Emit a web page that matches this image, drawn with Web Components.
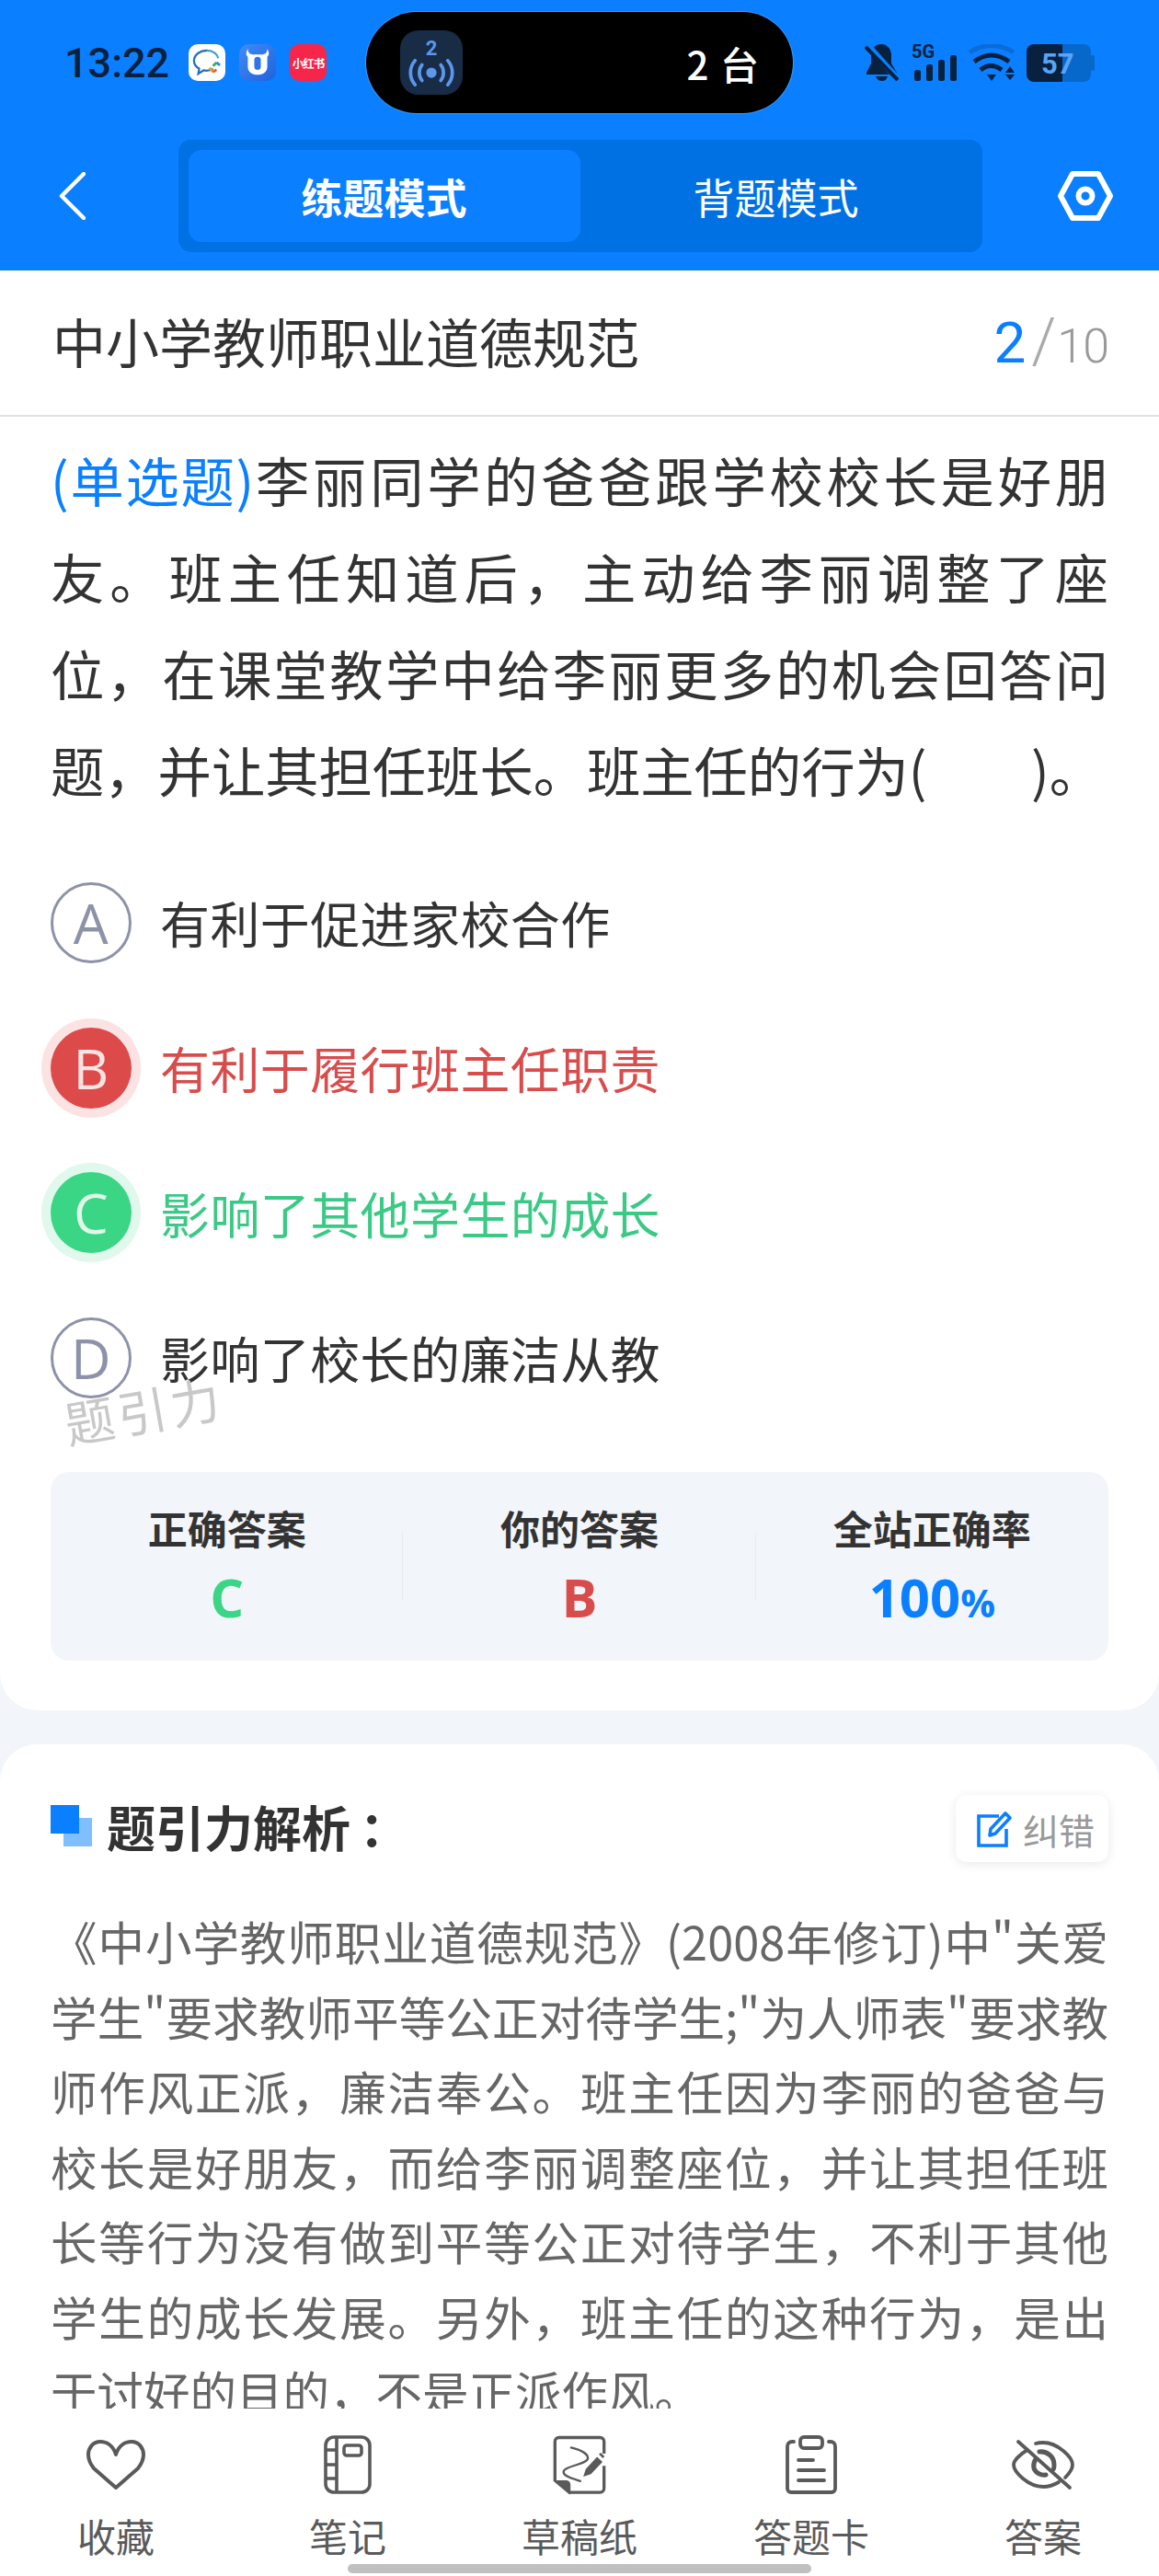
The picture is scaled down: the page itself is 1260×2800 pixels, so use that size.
<!DOCTYPE html>
<html lang="zh-CN">
<head>
<meta charset="UTF-8">
<title>题引力</title>
<style>
    html, body { margin: 0; padding: 0; background: #f2f5f9; }
    body { font-family: "Noto Sans CJK SC", sans-serif; }
</style>
</head>
<body>

<quiz-app>
    <status-bar slot="top"></status-bar>
    <mode-nav slot="top"></mode-nav>
    <title-bar slot="top" current="2" total="10">中小学教师职业道德规范</title-bar>

    <question-card><span slot="kind">(单选题)</span>李丽同学的爸爸跟学校校长是好朋友。班主任知道后，主动给李丽调整了座位，在课堂教学中给李丽更多的机会回答问题，并让其担任班长。班主任的行为(&emsp;&ensp;&nbsp;&nbsp;)。<option-item slot="options" letter="A">有利于促进家校合作</option-item>
        <option-item slot="options" letter="B" state="wrong">有利于履行班主任职责</option-item>
        <option-item slot="options" letter="C" state="right">影响了其他学生的成长</option-item>
        <option-item slot="options" letter="D">影响了校长的廉洁从教</option-item>
        <answer-stats slot="stats">
            <stat-item label="正确答案" tone="right">C</stat-item>
            <stat-item label="你的答案" tone="wrong">B</stat-item>
            <stat-item label="全站正确率" tone="blue">100<small style="font-size:42px">%</small></stat-item>
        </answer-stats>
    </question-card>

    <analysis-card>
        《中小学教师职业道德规范》(2008年修订)中"关爱学生"要求教师平等公正对待学生;"为人师表"要求教师作风正派，廉洁奉公。班主任因为李丽的爸爸与校长是好朋友，而给李丽调整座位，并让其担任班长等行为没有做到平等公正对待学生，不利于其他学生的成长发展。另外，班主任的这种行为，是出于讨好的目的，不是正派作风。
    </analysis-card>

    <tool-bar slot="bottom">
        <tool-item label="收藏">
            <svg viewBox="0 0 64 56" width="64" height="56" fill="none" stroke="#5a5a5a" stroke-width="4" stroke-linejoin="round"><path d="M32 17C29 7 22 3 15 3 7 3 2 10 2 17c0 6 2 10 6 15l24 21L56 32c4-5 6-9 6-15 0-7-5-14-13-14-7 0-14 4-17 14z"/></svg>
        </tool-item>
        <tool-item label="笔记">
            <svg viewBox="0 0 52 64" width="52" height="64" fill="none" stroke="#5a5a5a" stroke-width="3.6" stroke-linejoin="round"><rect x="2" y="2" width="48" height="60" rx="9"/><path d="M14 2v60M2 16h12M2 32h12M2 47h12"/><rect x="22" y="11" width="19" height="11" rx="3"/></svg>
        </tool-item>
        <tool-item label="草稿纸">
            <svg viewBox="35 35 175 195" width="58" height="65" fill="none" stroke="#5a5a5a" stroke-width="10" stroke-linejoin="round"><path d="M203 95V55a13 13 0 0 0-13-13H55a13 13 0 0 0-13 13v130"/><path d="M92 222h98a13 13 0 0 0 13-13v-74"/><path d="M42 185h36a12 12 0 0 1 12 12v28z" fill="#5a5a5a" stroke-width="6"/><path d="M95 75c30 7 55 20 55 35 0 20-80 25-80 45 0 15 35 23 55 30" stroke-width="7" stroke-linecap="round"/><path d="M135 170l8-25 37-40 18 17-38 40z" fill="#5a5a5a" stroke="none"/><path d="M186 97l6-5 13 12-6 6z" fill="#5a5a5a" stroke="none"/></svg>
        </tool-item>
        <tool-item label="答题卡">
            <svg viewBox="0 0 56 64" width="56" height="64" fill="none" stroke="#5a5a5a" stroke-width="3.8" stroke-linecap="round" stroke-linejoin="round"><rect x="16" y="2" width="24" height="12" rx="4"/><path d="M9 7H7a5 5 0 0 0-5 5v46a4 4 0 0 0 4 4h44a4 4 0 0 0 4-4V12a5 5 0 0 0-5-5h-2"/><path d="M14 27h16M14 38h28M14 49h28"/></svg>
        </tool-item>
        <tool-item label="答案">
            <svg viewBox="0 0 68 56" width="68" height="56" fill="none" stroke="#5a5a5a" stroke-width="3.8" stroke-linecap="round" stroke-linejoin="round"><path d="M7 3l56 50"/><path d="M17 12C8 17 2 24 2 28c0 8 16 24 32 24 6 0 12-2 17-5M26 5c3-1 5-1 8-1 16 0 32 16 32 24 0 4-3 9-8 14"/><path d="M26 22c-2 3-3 6-2 10 2 5 8 8 13 7M30 14c8-1 16 5 16 14 0 2 0 4-1 5" stroke-width="5"/></svg>
        </tool-item>
        <div slot="indicator"></div>
    </tool-bar>
</quiz-app>

<script>
    const cjk = '"Noto Sans CJK SC", sans-serif'

    function def(name, css, html) {
        customElements.define(name, class extends HTMLElement {
            connectedCallback() {
                if (this.shadowRoot) return
                const root = this.attachShadow({ mode: 'open' })
                root.innerHTML = `<style>${css}</style>` + (typeof html === 'function' ? html(this) : html)
            }
        })
    }

    def('quiz-app', `
        :host { display: flex; flex-direction: column; width: 1260px; height: 2800px; overflow: hidden; background: #f2f5f9; font-family: ${cjk}; }
        .scroll { flex: 1; min-height: 0; overflow: hidden; }
    `, `
        <slot name="top"></slot>
        <div class="scroll"><slot></slot></div>
        <slot name="bottom"></slot>
    `)

    def('status-bar', `
        :host { display: flex; align-items: center; height: 136px; box-sizing: border-box; padding: 0 70px; background: #0a7fff; color: #07213f; }
        .time { font: 500 45px/1 Roboto, sans-serif; width: 135px; }
        .apps { display: flex; gap: 15px; width: 193px; }
        .app { width: 40px; height: 40px; border-radius: 10px; display: flex; align-items: center; justify-content: center; }
        .wechat { background: #fff; }
        .cow { background: linear-gradient(135deg, #3f8cf5, #2161de); }
        .red { background: #f5264a; color: #fff; font-size: 12.5px; font-weight: 700; white-space: nowrap; letter-spacing: -1px; }
        .island { width: 464px; height: 110px; border-radius: 55px; background: #000; display: flex; align-items: center; justify-content: space-between; padding: 0 37px 0 37px; box-sizing: border-box; box-shadow: 0 0 0 1px rgba(255,255,255,.2); color: #fff; }
        .cast { width: 68px; height: 70px; border-radius: 20px; background: #182c45; color: #5c96ee; display: flex; flex-direction: column; align-items: center; }
        .cast span { font: 700 22px/1 Roboto, sans-serif; margin-top: 9px; }
        .count { font-size: 42px; font-weight: 500; word-spacing: 3px; }
        .right { display: flex; align-items: center; margin-left: auto; gap: 13px; }
        .signal { margin: -8px 0; }
    `, `
        <span class="time">13:22</span>
        <div class="apps">
            <div class="app wechat"><svg width="34" height="32" viewBox="0 0 36 34" fill="none"><path d="M18 3C10 3 3 8 3 15c0 4 2 7 6 9l-1 6 6-4c4 1 8 0 11-2" stroke="#2a6fb8" stroke-width="2.4"/><path d="M31 12c-1-5-6-9-13-9" stroke="#3d9ad9" stroke-width="2.4"/><path d="M25 21l4-4" stroke="#36b14a" stroke-width="3"/><path d="M29 17l4 3" stroke="#2a8fe0" stroke-width="3"/><path d="M21 23l4 5" stroke="#e8a23a" stroke-width="3"/><path d="M25 28l4-3" stroke="#e65c3c" stroke-width="3"/></svg></div>
            <div class="app cow"><svg width="30" height="32" viewBox="0 0 34 36" fill="none"><path d="M5 1c0 5 3 7 6 7h12c3 0 6-2 6-7 2 4 3 7 0 10v12c0 7-6 10-12 10S5 30 5 23V11C2 8 3 5 5 1z" fill="#fff"/><path d="M17 11c-3 0-4 2-4 4v8c0 3 2 4 4 4s4-1 4-4v-8c0-2-1-4-4-4z" fill="#2f74e8"/></svg></div>
            <div class="app red">小红书</div>
        </div>
        <div class="island">
            <div class="cast"><span>2</span>
                <svg width="50" height="30" viewBox="0 0 52 32" fill="none" stroke="currentColor" stroke-width="4" stroke-linecap="round"><circle cx="26" cy="16" r="6" fill="currentColor" stroke="none"/><path d="M15 7c-4 5-4 13 0 18M37 7c4 5 4 13 0 18M7 2c-7 8-7 20 0 28M45 2c7 8 7 20 0 28"/></svg>
            </div>
            <span class="count">2 台</span>
        </div>
        <div class="right">
            <svg width="38" height="40" viewBox="0 0 38 40" fill="#07213f"><path d="M18 0c7 0 11 6 11 12v9l6 10v2H2v-2l5-10v-9C7 6 11 0 18 0z"/><path d="M12 35h13c-1 3-3 5-6 5s-6-2-7-5z"/><path d="M3 1l34 38" stroke="#0a7fff" stroke-width="7"/><path d="M1 3l35 36" stroke="#07213f" stroke-width="4"/></svg>
            <svg class="signal" width="49" height="56" viewBox="0 -8 49 56"><text x="0" y="15" font-family="Roboto,sans-serif" font-weight="700" font-size="20" fill="#07213f">5G</text><g fill="#07213f"><rect x="3" y="28" width="7" height="12" rx="2.5"/><rect x="16" y="22" width="7" height="18" rx="2.5"/><rect x="29" y="17" width="7" height="23" rx="2.5"/><rect x="42" y="12" width="7" height="28" rx="2.5"/></g></svg>
            <svg width="50" height="40" viewBox="0 0 50 40" fill="none"><path d="M1 9Q25-6 49 9" stroke="#0a6cd8" stroke-width="5"/><path d="M6 19Q25 5 44 19" stroke="#07213f" stroke-width="5"/><path d="M13 28Q24 19 36 28" stroke="#07213f" stroke-width="5"/><path d="M20 33h10l-5 7z" fill="#07213f"/><path d="M40 31h10l-5-7zM40 33h10l-5 6z" fill="#07213f"/></svg>
            <svg width="74" height="41" viewBox="0 0 74 41"><path d="M39 0h23a8 8 0 0 1 8 8v25a8 8 0 0 1-8 8H39z" fill="#0768cc"/><rect x="69" y="12" width="5" height="17" rx="2.5" fill="#0768cc"/><path d="M8 0h31v41H8a8 8 0 0 1-8-8V8a8 8 0 0 1 8-8z" fill="#07213f"/><text x="16" y="32" font-family="Roboto,sans-serif" font-weight="700" font-size="31" fill="#5aa3f5">57</text></svg>
        </div>
    `)

    def('mode-nav', `
        :host { display: flex; align-items: center; justify-content: space-between; height: 158px; box-sizing: border-box; padding: 16px 50px 20px 64px; background: #0a7fff; color: #fff; }
        .tabs { display: flex; width: 874px; height: 122px; margin-left: 18px; padding: 11px; box-sizing: border-box; background: #0071e3; border-radius: 14px; }
        .tab { flex: 1; display: flex; align-items: center; justify-content: center; font-size: 45px; border-radius: 14px; }
        .tab.on { background: #0a7fff; font-weight: 700; }
    `, `
        <svg width="29" height="52" viewBox="0 0 29 52" fill="none" stroke="#fff" stroke-width="4.4" stroke-linecap="round" stroke-linejoin="round"><path d="M27 2L3 26l24 24"/></svg>
        <div class="tabs"><div class="tab on">练题模式</div><div class="tab">背题模式</div></div>
        <svg width="60" height="54" viewBox="0 0 60 54" fill="none" stroke="#fff" stroke-width="6" stroke-linejoin="round"><path d="M16 3h28l13 24-13 24H16L3 27z"/><circle cx="30" cy="27" r="7.5"/></svg>
    `)

    def('title-bar', `
        :host { display: flex; align-items: center; justify-content: space-between; height: 159px; box-sizing: border-box; padding: 0 55px 0 57px; background: #fff; border-bottom: 2px solid #e2e2e2; font-size: 58px; color: #333; }
        .title { margin-top: -6px; }
        .count { font: 300 52px/1 Roboto, sans-serif; color: #999; display: flex; align-items: baseline; margin-top: -4px; letter-spacing: -1px; }
        .count b { font: 400 62px/1 Roboto, sans-serif; color: #0a7fff; }
        .slash { font-size: 68px; margin: 0 2px 0 7px; color: #aaa; }
    `, el => `
        <span class="title"><slot></slot></span>
        <span class="count"><b>${el.getAttribute('current')}</b><span class="slash">/</span>${el.getAttribute('total')}</span>
    `)

    def('question-card', `
        :host { display: block; background: #fff; border-radius: 0 0 40px 40px; height: 1406px; box-sizing: border-box; padding: 15px 55px 0; position: relative; }
        .text { font-size: 58.3px; line-height: 105px; color: #333; text-align: justify; }
        ::slotted([slot=kind]) { color: #0a7fff; letter-spacing: -2px; }
        .options { display: flex; flex-direction: column; margin-top: 36px; }
        .stats { margin-top: 45px; }
        .mark { position: absolute; left: 69px; top: 1039px; font-size: 54px; color: #c8c8c8; letter-spacing: 4px; transform: rotate(-10deg); }
    `, `
        <div class="text"><slot name="kind"></slot><slot></slot></div>
        <div class="options"><slot name="options"></slot></div>
        <div class="stats"><slot name="stats"></slot></div>
        <div class="mark">题引力</div>
    `)

    def('option-item', `
        :host { display: flex; align-items: center; height: 157.7px; gap: 31px; font-size: 54px; color: #333; letter-spacing: 0.4px; }
        .dot { width: 88px; height: 88px; box-sizing: border-box; border-radius: 50%; border: 3px solid #8d92a8; color: #8d92a8; display: flex; align-items: center; justify-content: center; font: 400 60px/1 "Open Sans", sans-serif; flex: none; }
        :host([state=wrong]) { color: #d84c4c; }
        :host([state=wrong]) .dot { background: #dc4a4a; border: 0; color: #fbe3e3; box-shadow: 0 0 0 10px #fbe3e3; }
        :host([state=right]) { color: #3bc986; }
        :host([state=right]) .dot { background: #3ad585; border: 0; color: #dff8ea; box-shadow: 0 0 0 10px #e1f8ec; }
    `, el => `
        <span class="dot">${el.getAttribute('letter')}</span>
        <span><slot></slot></span>
    `)

    def('answer-stats', `
        :host { display: flex; align-items: stretch; height: 205px; background: #f2f5f9; border-radius: 20px; }
        ::slotted(stat-item) { flex: 1; }
    `, `<slot></slot>`)

    def('stat-item', `
        :host { display: flex; flex-direction: column; align-items: center; padding-top: 32px; box-sizing: border-box; position: relative; }
        :host(:not(:last-child))::after { content: ""; position: absolute; right: 0; top: 66px; height: 74px; width: 1px; background: #e8ebef; }
        .label { font-size: 43px; font-weight: 700; line-height: 56px; color: #333; }
        .value { font: 700 58px/1 "Open Sans", sans-serif; margin-top: 19px; }
        :host([tone=right]) .value { color: #3ad585; }
        :host([tone=wrong]) .value { color: #d84c4c; }
        :host([tone=blue]) .value { color: #0a7fff; }
    `, el => `
        <span class="label">${el.getAttribute('label')}</span>
        <span class="value"><slot></slot></span>
    `)

    def('analysis-card', `
        :host { display: block; margin-top: 37px; background: #fff; border-radius: 40px 40px 0 0; padding: 55px 55px 0; height: 900px; box-sizing: border-box; }
        .head { display: flex; align-items: center; justify-content: space-between; height: 73px; }
        .name { display: flex; align-items: center; font-size: 53px; font-weight: 700; color: #333; margin-top: -6px; }
        .mark { width: 45px; height: 45px; position: relative; flex: none; margin-right: 16px; }
        .mark i { position: absolute; width: 31px; height: 31px; }
        .mark i:first-child { right: 0; bottom: 0; background: #80bfff; }
        .mark i:last-child { left: 0; top: 0; background: #0a7fff; }
        .colon { margin-left: 10px; }
        .fix { display: flex; align-items: center; gap: 12px; width: 166px; height: 73px; box-sizing: border-box; padding-left: 23px; border-radius: 12px; background: #fff; box-shadow: 0 2px 12px rgba(0,0,0,.09); color: #999; font-size: 39px; }
        .body { margin-top: 45px; font-size: 50.5px; line-height: 81.5px; color: #666; text-align: justify; }
    `, `
        <div class="head">
            <div class="name"><span class="mark"><i></i><i></i></span>题引力解析<span class="colon">：</span></div>
            <div class="fix"><svg width="38" height="40" viewBox="0 0 38 40" fill="none" stroke="#0a7fff" stroke-width="3.6"><path d="M24 6H2v32h30V20"/><path d="M14 27l1-7L31 3l5 5-16 17z" stroke-linejoin="round"/></svg>纠错</div>
        </div>
        <div class="body"><slot></slot></div>
    `)

    def('tool-bar', `
        :host { display: flex; position: relative; height: 182px; background: #fff; }
        ::slotted(tool-item) { flex: 1; }
        ::slotted([slot=indicator]) { position: absolute; left: 378px; bottom: 3px; width: 504px; height: 10px; border-radius: 5px; background: #c0c0c0; }
    `, `<slot></slot><slot name="indicator"></slot>`)

    def('tool-item', `
        :host { display: flex; flex-direction: column; align-items: center; padding-top: 29px; box-sizing: border-box; color: #5a5a5a; font-size: 42px; }
        .icon { height: 64px; display: flex; align-items: center; }
        .label { line-height: 56px; margin-top: 17px; }
    `, el => `
        <div class="icon"><slot></slot></div>
        <span class="label">${el.getAttribute('label')}</span>
    `)
</script>
</body>
</html>
